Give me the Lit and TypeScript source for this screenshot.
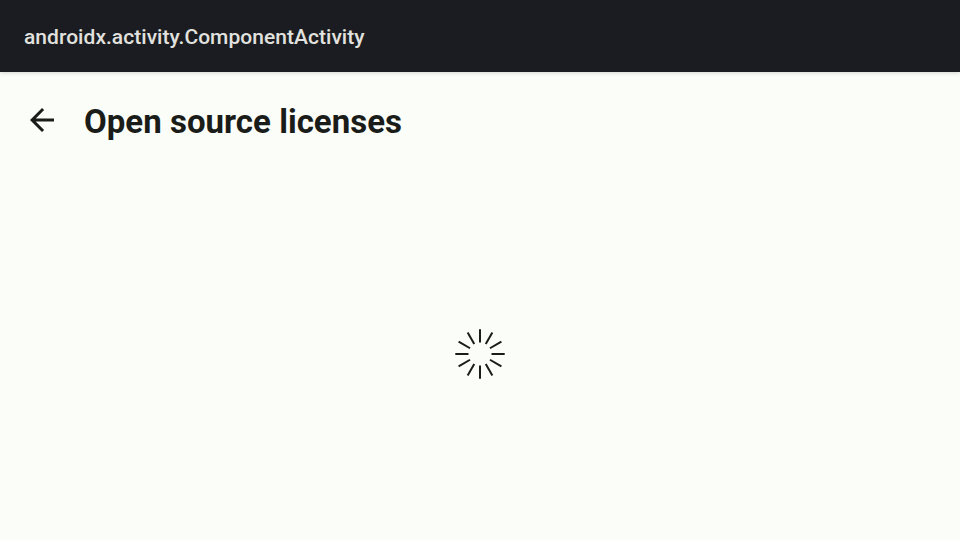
import { LitElement, html, css, svg } from "lit";
import { customElement } from "lit/decorators.js";

const SPOKES = Array.from({ length: 12 }, (_, i) => i * 30);

@customElement("app-root")
export class AppRoot extends LitElement {
  static styles = css`
    :host {
      display: flex;
      flex-direction: column;
      width: 100%;
      height: 100vh;
      overflow: hidden;
      background: #fbfdf8;
      color: #1a1c19;
      font-family: Roboto, sans-serif;
    }
    .action-bar {
      position: relative;
      display: flex;
      align-items: center;
      flex: none;
      box-sizing: border-box;
      height: 72px;
      padding: 1px 24px 0;
      background: #1b1c21;
      color: #e1e2df;
      font-size: 21px;
      line-height: 28px;
      font-weight: 500;
      letter-spacing: 0.04px;
      box-shadow: 0 1px 4px rgba(0, 0, 0, 0.16);
    }
    .top-bar {
      display: flex;
      align-items: center;
      flex: none;
      height: 96px;
      padding: 0 24px;
      gap: 24px;
    }
    .back {
      display: block;
      width: 36px;
      height: 36px;
    }
    h1 {
      margin: 4px 0 0;
      font-size: 33px;
      line-height: 42px;
      font-weight: 700;
      letter-spacing: 0.02px;
    }
    .content {
      flex: 1;
      display: flex;
      align-items: center;
      justify-content: center;
    }
    .spinner {
      display: block;
      width: 50px;
      height: 50px;
    }
  `;

  render() {
    return html`
      <header class="action-bar">androidx.activity.ComponentActivity</header>
      <div class="top-bar">
        <svg class="back" viewBox="0 0 24 24" fill="currentColor">
          <path d="M20 11H7.83l5.59-5.59L12 4l-8 8 8 8 1.41-1.41L7.83 13H20v-2z" />
        </svg>
        <h1>Open source licenses</h1>
      </div>
      <main class="content">
        <svg class="spinner" viewBox="-25 -25 50 50" stroke="currentColor" stroke-width="2">
          ${SPOKES.map((a) => svg`<line x1="0" y1="-11.5" x2="0" y2="-24.7" transform="rotate(${a})" />`)}
        </svg>
      </main>
    `;
  }
}
